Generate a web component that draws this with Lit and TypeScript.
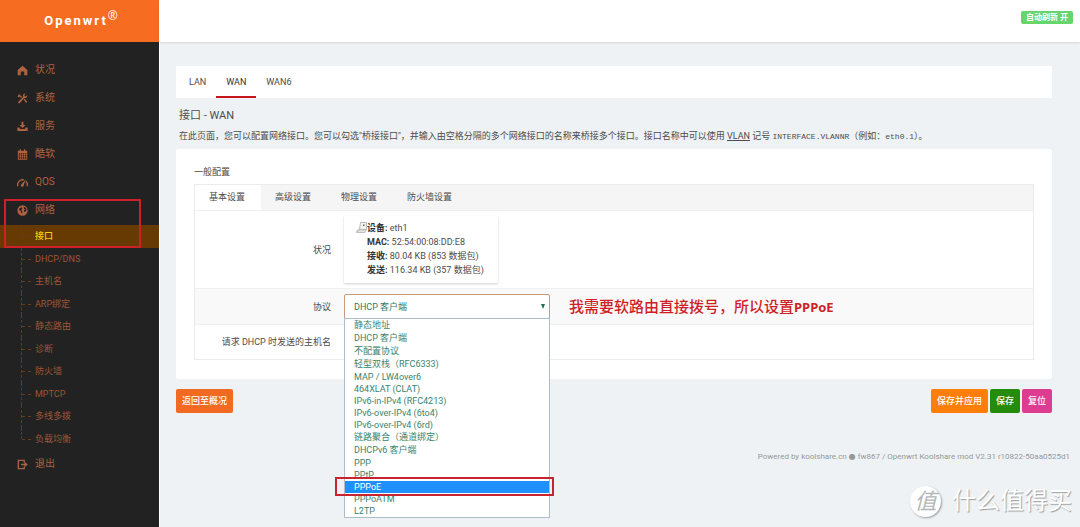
import { LitElement, html, css, svg, type TemplateResult } from "lit";
import { customElement, state } from "lit/decorators.js";
import { classMap } from "lit/directives/class-map.js";

const icons: Record<string, TemplateResult> = {
  home: svg`<path d="M8 1 15 7.400V15h-4.500V9.600H5.500V15H1V7.400z"/>`,
  tools: svg`<path d="M3 1.600 7.300 5.900 5.900 7.300 3.700 5.100 2.300 6.500 0.800 5z"/><path d="M10.200 1.200a3.500 3.500 0 0 1 2.200-.2l-1.600 1.700.3 1.900 1.900.3 1.800-1.700a3.600 3.600 0 0 1-4.500 4.300L4 14.600a1.300 1.300 0 0 1-2-2L8.900 5.700a3.600 3.600 0 0 1 1.300-4.500z"/><path d="m9.600 9.200 1.200-1 4 4.300-1.700 1.900z"/>`,
  download: svg`<path d="M6.600 1h2.800v4.800h3L8 10.300 3.600 5.800h3z"/><path d="M.5 9.500h2.800l1.200 2h7l1.200-2h2.800V14.500H.5z"/>`,
  calendar: svg`<path fill-rule="evenodd" d="M4 .5h1.800v2h4.400v-2H12v2h2.800V15.500H1.200V2.500H4zM2.500 6v2h2V6zm3 0v2h2V6zm3 0v2h2V6zm3 0v2h2V6zm-9 3v2h2V9zm3 0v2h2V9zm3 0v2h2V9zm3 0v2h2V9zm-9 3v2h2v-2zm3 0v2h2v-2zm3 0v2h2v-2zm3 0v2h2v-2z"/>`,
  gauge: svg`<path d="M1.400 13.500A7.200 7.200 0 0 1 10 4.300M13 6.200a7.200 7.200 0 0 1 1.600 7.300" fill="none" stroke="currentColor" stroke-width="2"/><path d="M12.700 3.200 9.500 12.600a2 2 0 1 1-3.400-1.800z"/>`,
  globe: svg`<path fill-rule="evenodd" d="M8 .5a7.500 7.500 0 1 1 0 15A7.500 7.500 0 0 1 8 .5zM3.600 4.600 3 7.200l2.200 1.200 1 2.800 1.300 1.200.4-2.600-1.700-2.200L7.700 5l-.9-1.800zM9.600 2.600l.5 2.600 1.600 1.200-1.900 1.200 1 2.400 1.600-.2 1.100-2.400.2-1.900-1.500-2z"/>`,
  exit: svg`<path d="M10.500 5V2H2v12h8.500v-3M6 8h8" fill="none" stroke="currentColor" stroke-width="2"/><path d="m11 4 4.700 4L11 12z"/>`,
};

const icon = (name: string) =>
  html`<svg class="icon" viewBox="0 0 16 16" aria-hidden="true">${icons[name]}</svg>`;

const menu = [
  { icon: "home", label: "状况" },
  { icon: "tools", label: "系统" },
  { icon: "download", label: "服务" },
  { icon: "calendar", label: "酷软" },
  { icon: "gauge", label: "QOS" },
  {
    icon: "globe",
    label: "网络",
    children: ["接口", "DHCP/DNS", "主机名", "ARP绑定", "静态路由", "诊断", "防火墙", "MPTCP", "多线多拨", "负载均衡"],
  },
  { icon: "exit", label: "退出" },
];

const protocols = [
  "静态地址", "DHCP 客户端", "不配置协议", "轻型双栈（RFC6333)", "MAP / LW4over6",
  "464XLAT (CLAT)", "IPv6-in-IPv4 (RFC4213)", "IPv6-over-IPv4 (6to4)", "IPv6-over-IPv4 (6rd)",
  "链路聚合（通道绑定）", "DHCPv6 客户端", "PPP", "PPtP", "PPPoE", "PPPoATM", "L2TP",
];

const hasHan = (text: string) => /[\u4e00-\u9fff]/.test(text);

@customElement("side-menu")
export class SideMenu extends LitElement {
  static styles = css`
    :host {
      display: block;
      position: relative;
      background: #222222;
      color: #ae6240;
      padding-top: 14px;
    }
    ul { list-style: none; margin: 0; padding: 0; }
    a { color: inherit; text-decoration: none; }
    .item {
      display: flex;
      align-items: center;
      gap: 7px;
      height: 28px;
      padding-left: 17px;
      font-size: 10px;
    }
    .icon { width: 11px; height: 11px; fill: currentColor; }
    .sub {
      display: grid;
      grid-auto-rows: 1fr;
      min-height: 225px;
      margin-top: 1px;
      color: #9f5536;
      font-size: 9px;
    }
    .sub li { position: relative; display: grid; }
    .sub li::before {
      content: "";
      position: absolute;
      left: 21px;
      top: 0;
      bottom: 0;
      border-left: 1px dashed #683a1c;
    }
    .sub li:last-child::before { bottom: 50%; }
    .sub li::after {
      content: "";
      position: absolute;
      left: 22px;
      top: 50%;
      width: 9px;
      border-top: 1px dashed #683a1c;
    }
    .sub a { display: flex; align-items: center; padding-left: 35px; }
    .sub .current { background: #663a02; color: #f0d010; font-weight: 500; }
    .mark {
      position: absolute;
      left: 4px;
      top: 157px;
      width: 137px;
      height: 49px;
      box-sizing: border-box;
      border: 2px solid #cf2027;
      pointer-events: none;
    }
  `;

  render() {
    return html`
      <nav>
        <ul>
          ${menu.map(
            (m) => html`<li>
              <a class="item" href="#">${icon(m.icon)}<span>${m.label}</span></a>
              ${m.children
                ? html`<ul class="sub">
                    ${m.children.map(
                      (c, i) => html`<li class=${classMap({ current: i === 0 })}><a href="#">${c}</a></li>`
                    )}
                  </ul>`
                : null}
            </li>`
          )}
        </ul>
      </nav>
      <div class="mark"></div>
    `;
  }
}

@customElement("protocol-picker")
export class ProtocolPicker extends LitElement {
  @state() private highlighted = "PPPoE";

  static styles = css`
    :host { display: block; position: relative; width: 206px; }
    select {
      display: block;
      appearance: none;
      width: 100%;
      height: 25px;
      margin: 0;
      padding: 0 9px;
      border: 1px solid #c99a7c;
      border-radius: 2px;
      background: #fff;
      color: #2b7c66;
      font: inherit;
      outline: none;
    }
    .arrow {
      position: absolute;
      right: 5px;
      top: 10px;
      width: 4px;
      height: 5px;
      fill: #17705a;
      pointer-events: none;
    }
    .list {
      position: absolute;
      z-index: 2;
      top: 24px;
      left: 0;
      right: 0;
      margin: 0;
      padding: 0;
      list-style: none;
      border: 1px solid #b0bccb;
      background: #fff;
      color: #3a846c;
    }
    .list li { padding: 0 9px; line-height: 12px; height: 12px; cursor: default; }
    .list .han { line-height: 13px; height: 13px; }
    .list .on { position: relative; background: #1e90ff; color: #fff; }
    .mark {
      position: absolute;
      left: -10px;
      right: -5px;
      top: -4px;
      bottom: -3px;
      border: 2px solid #c8242f;
      pointer-events: none;
    }
  `;

  render() {
    return html`
      <select aria-label="协议">
        ${protocols.map((p) => html`<option ?selected=${p === "DHCP 客户端"}>${p}</option>`)}
      </select>
      <svg class="arrow" viewBox="0 0 4 5" aria-hidden="true"><path d="M0 0h4L2 5z" /></svg>
      <ul class="list" role="listbox" aria-label="协议">
        ${protocols.map((p) => {
          const on = p === this.highlighted;
          return html`<li
            role="option"
            aria-selected=${on ? "true" : "false"}
            class=${classMap({ han: hasHan(p), on })}
            @mouseenter=${() => (this.highlighted = p)}
          >${p}${on ? html`<span class="mark"></span>` : null}</li>`;
        })}
      </ul>
    `;
  }
}

@customElement("app-root")
export class AppRoot extends LitElement {
  static styles = css`
    :host {
      display: grid;
      grid-template-columns: 159px minmax(0, 1fr);
      grid-template-rows: 42px 1fr;
      min-height: 100vh;
      position: relative;
      overflow: hidden;
      background: #eef2f4;
      color: #4c4c4c;
      font-family: Roboto, "Noto Sans CJK SC", sans-serif;
      font-size: 9px;
      line-height: 14px;
    }
    a { color: inherit; }
    .brand {
      display: flex;
      align-items: center;
      justify-content: center;
      padding-left: 3px;
      background: #f66d21;
      color: #fff;
      font-size: 13px;
      font-weight: 700;
      letter-spacing: 2px;
      text-decoration: none;
    }
    .brand sup { font-family: "Open Sans", sans-serif; font-size: 12px; font-weight: 400; line-height: 1px; letter-spacing: 0; }
    .top {
      display: flex;
      justify-content: flex-end;
      align-items: flex-start;
      padding: 11px 7px 0;
      background: #fff;
      box-shadow: 0 1px 2px #0000001c;
    }
    .refresh {
      border: 0;
      border-radius: 2px;
      padding: 0 5px;
      height: 13px;
      background: #65d56c;
      color: #fff;
      font: 700 8px/13px Roboto, "Noto Sans CJK SC", sans-serif;
    }
    main { border-left: 1px solid #fff; padding: 24px 10px 0 16px; }
    .page { padding-right: 18px; }
    .tabs {
      display: flex;
      height: 32px;
      padding-left: 3px;
      background: #fff;
      line-height: 32px;
    }
    .tabs a { padding: 0 10px; text-decoration: none; }
    .tabs .active { box-shadow: inset 0 -2px #c9161c; color: #333; }
    h1 { margin: 10px 3px 0; font-size: 11px; font-weight: 400; line-height: 16px; }
    .about { margin: 5px 3px 0; }
    .about code { font-family: "Liberation Mono", monospace; font-size: 8px; }
    .card {
      margin-top: 5px;
      padding: 16px 18px 19px;
      border-radius: 3px;
      background: #fff;
    }
    h2 { margin: 0 0 5px; color: #5a4632; font-size: 9px; font-weight: 400; line-height: 14px; }
    .panel { border: 1px solid #ebebeb; }
    .subtabs { display: flex; background: #f5f5f5; line-height: 25px; }
    .subtabs a { padding: 0 16px 0 14px; text-decoration: none; }
    .subtabs .active { background: #fff; }
    .row {
      display: grid;
      grid-template-columns: 136px 1fr;
      column-gap: 13px;
      align-items: center;
      border-top: 1px solid #f0f0f0;
      padding: 5px 0;
    }
    .row.alt { background: #f9f9f9; }
    .label { text-align: right; }
    .status {
      display: flex;
      justify-self: start;
      padding: 5px 10px 6px 12px;
      background: #fff;
      box-shadow: 0 1px 2px #00000030;
      min-width: 132px;
    }
    .port { width: 11px; height: 14px; }
    dl { margin: 0; }
    dt { display: inline; font-weight: 700; color: #333; }
    dd { display: inline; margin: 0; }
    .choice { display: flex; align-items: center; gap: 19px; }
    .note {
      color: #cf1f26;
      font-family: "Noto Sans", "Noto Sans CJK SC", sans-serif;
      font-size: 15px;
      font-weight: 500;
      line-height: 20px;
    }
    .note b { font-size: 13px; font-weight: 700; }
    .host {
      width: 206px;
      height: 24px;
      box-sizing: border-box;
      border: 1px solid #ddd;
      border-radius: 2px;
      font: inherit;
    }
    .actions { display: flex; gap: 2px; margin-top: 10px; }
    .actions button {
      height: 24px;
      padding: 0 6px;
      border: 0;
      border-radius: 2px;
      color: #fff;
      font: inherit;
      font-weight: 500;
    }
    .back { background: #f26a22; margin-right: auto; }
    .apply { background: #ff7e0a; }
    .save { background: #258c0b; }
    .reset { background: #dc3d91; }
    footer {
      margin-top: 37px;
      color: #95989a;
      font-size: 8px;
      text-align: right;
    }
    footer a { text-decoration: none; }
    .dot { font-family: "DejaVu Sans", sans-serif; }
    .watermark {
      position: absolute;
      right: 8px;
      bottom: 10px;
      display: flex;
      align-items: center;
      gap: 11px;
      color: #fff;
      font-size: 24px;
      line-height: 32px;
      text-shadow: 1px 1px 1px #9b9fa2;
    }
    .seal {
      width: 31px;
      height: 31px;
      border-radius: 50%;
      background: #fff;
      box-shadow: 1px 1px 2px #9b9fa2;
      color: #b4b7b9;
      font-size: 22px;
      font-style: italic;
      line-height: 31px;
      text-align: center;
      text-shadow: none;
    }
  `;

  render() {
    return html`
      <a class="brand" href="#"><span>Openwrt<sup>®</sup></span></a>
      <header class="top"><button class="refresh">自动刷新 开</button></header>
      <side-menu></side-menu>
      <main>
        <div class="page">
          <nav class="tabs">
            <a href="#">LAN</a><a class="active" href="#">WAN</a><a href="#">WAN6</a>
          </nav>
          <h1>接口 - WAN</h1>
          <p class="about">在此页面，您可以配置网络接口。您可以勾选"桥接接口"，并输入由空格分隔的多个网络接口的名称来桥接多个接口。接口名称中可以使用 <a href="#">VLAN</a> 记号 <code>INTERFACE.VLANNR</code>（例如：<code>eth0.1</code>）。</p>
          <section class="card">
            <h2>一般配置</h2>
            <div class="panel">
              <nav class="subtabs">
                <a class="active" href="#">基本设置</a><a href="#">高级设置</a><a href="#">物理设置</a><a href="#">防火墙设置</a>
              </nav>
              <div class="row">
                <span class="label">状况</span>
                <div class="status">
                  <svg class="port" viewBox="0 0 11 14" aria-hidden="true">
                    <path d="M4.500 1.500h6v7H3.500z" fill="#f2f2f2" stroke="#aaa" stroke-width=".8" />
                    <path d="M7 3.500h1.500v1.500H7z" fill="#666" />
                    <path d="M3.500 8.500 1 11M1 9.500 3 8.700h7.300L8.800 11.500H.5z" fill="#e4e4e4" stroke="#aaa" stroke-width=".7" />
                  </svg>
                  <dl>
                    <div><dt>设备:</dt> <dd>eth1</dd></div>
                    <div><dt>MAC:</dt> <dd>52:54:00:08:DD:E8</dd></div>
                    <div><dt>接收:</dt> <dd>80.04 KB (853 数据包)</dd></div>
                    <div><dt>发送:</dt> <dd>116.34 KB (357 数据包)</dd></div>
                  </dl>
                </div>
              </div>
              <div class="row alt">
                <span class="label">协议</span>
                <div class="choice">
                  <protocol-picker></protocol-picker>
                  <span class="note">我需要软路由直接拨号，所以设置<b>PPPoE</b></span>
                </div>
              </div>
              <div class="row">
                <label class="label" for="host">请求 DHCP 时发送的主机名</label>
                <div><input class="host" id="host" type="text" /></div>
              </div>
            </div>
          </section>
          <div class="actions">
            <button class="back">返回至概况</button>
            <button class="apply">保存并应用</button>
            <button class="save">保存</button>
            <button class="reset">复位</button>
          </div>
        </div>
        <footer>Powered by <a href="#">koolshare.cn</a> <span class="dot">●</span> fw867 / Openwrt Koolshare mod V2.31 r10822-50aa0525d1</footer>
      </main>
      <div class="watermark"><span class="seal">值</span><span>什么值得买</span></div>
    `;
  }
}
